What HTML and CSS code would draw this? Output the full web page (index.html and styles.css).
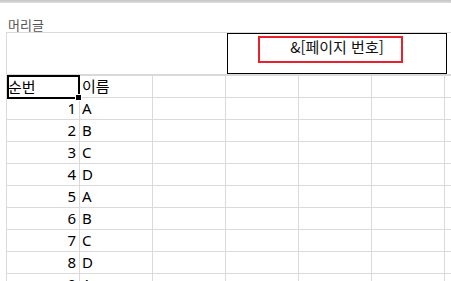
FILE: index.html
```html
<!DOCTYPE html>
<html lang="ko">
<head>
<meta charset="utf-8">
<title>머리글</title>
<link rel="stylesheet" href="styles.css">
</head>
<body>
<div class="topbar"></div>
<div class="label">머리글</div>
<div class="sheet">
  <div class="header-area">
    <div class="header-box">
      <span class="header-text">&amp;[페이지 번호]</span>
      <div class="mark"></div>
    </div>
  </div>
  <div class="grid">
    <div class="cell sel">순번<div class="selbox"><span class="handle"></span></div></div><div class="cell">이름</div><div class="cell"></div><div class="cell"></div><div class="cell"></div><div class="cell"></div><div class="cell"></div>
    <div class="cell num">1</div><div class="cell">A</div><div class="cell"></div><div class="cell"></div><div class="cell"></div><div class="cell"></div><div class="cell"></div>
    <div class="cell num">2</div><div class="cell">B</div><div class="cell"></div><div class="cell"></div><div class="cell"></div><div class="cell"></div><div class="cell"></div>
    <div class="cell num">3</div><div class="cell">C</div><div class="cell"></div><div class="cell"></div><div class="cell"></div><div class="cell"></div><div class="cell"></div>
    <div class="cell num">4</div><div class="cell">D</div><div class="cell"></div><div class="cell"></div><div class="cell"></div><div class="cell"></div><div class="cell"></div>
    <div class="cell num">5</div><div class="cell">A</div><div class="cell"></div><div class="cell"></div><div class="cell"></div><div class="cell"></div><div class="cell"></div>
    <div class="cell num">6</div><div class="cell">B</div><div class="cell"></div><div class="cell"></div><div class="cell"></div><div class="cell"></div><div class="cell"></div>
    <div class="cell num">7</div><div class="cell">C</div><div class="cell"></div><div class="cell"></div><div class="cell"></div><div class="cell"></div><div class="cell"></div>
    <div class="cell num">8</div><div class="cell">D</div><div class="cell"></div><div class="cell"></div><div class="cell"></div><div class="cell"></div><div class="cell"></div>
    <div class="cell num">9</div><div class="cell">A</div><div class="cell"></div><div class="cell"></div><div class="cell"></div><div class="cell"></div><div class="cell"></div>
  </div>
</div>
</body>
</html>
```
FILE: styles.css
```css
html, body {
  margin: 0;
  padding: 0;
  background: #fff;
  overflow: hidden;
  width: 451px;
  height: 281px;
}
body {
  font-family: "Noto Sans", "Noto Sans CJK KR", sans-serif;
  color: #000;
}
.topbar {
  height: 3px;
  background: linear-gradient(#c4c4c4, #dedede);
}
.label {
  margin-left: 8px;
  padding-top: 14px;
  height: 15px;
  line-height: 15px;
  font-size: 13px;
  color: #555;
  font-family: "Noto Sans CJK KR", sans-serif;
}
.sheet {
  margin-left: 6px;
  border-left: 1px solid #dadada;
  border-top: 1px solid #dadada;
  width: 600px;
}
.header-area {
  height: 41px;
  border-bottom: 2px solid #dadada;
  display: flex;
}
.header-box {
  position: relative;
  margin-left: 220px;
  width: 220px;
  height: 41px;
  box-sizing: border-box;
  border: 1px solid #000;
  text-align: center;
  padding-top: 2px;
}
.header-text {
  font-family: "Noto Sans CJK KR", sans-serif;
  font-size: 15px;
  line-height: 20px;
  color: #111;
}
.mark {
  position: absolute;
  left: 30px;
  top: 2px;
  width: 145px;
  height: 27px;
  box-sizing: border-box;
  border: 2px solid #e8212b;
}
.grid {
  display: grid;
  grid-template-columns: repeat(7, 73px);
  grid-auto-rows: 22px;
}
.cell {
  box-sizing: border-box;
  border-right: 1px solid #dadada;
  border-bottom: 1px solid #dadada;
  font-size: 15px;
  line-height: 21px;
  padding: 0 2px;
  white-space: nowrap;
  overflow: hidden;
}
.cell.num {
  text-align: right;
  padding-right: 3px;
}
.cell.sel {
  position: relative;
  overflow: visible;
  padding-left: 1px;
  font-family: "Noto Sans CJK KR", sans-serif;
}
.selbox {
  position: absolute;
  left: 0;
  top: -1px;
  width: 73px;
  height: 24px;
  box-sizing: border-box;
  border: 2px solid #000;
  z-index: 2;
}
.handle {
  position: absolute;
  right: -4px;
  bottom: -4px;
  width: 5px;
  height: 5px;
  background: #000;
  border: 1px solid #fff;
}
```
